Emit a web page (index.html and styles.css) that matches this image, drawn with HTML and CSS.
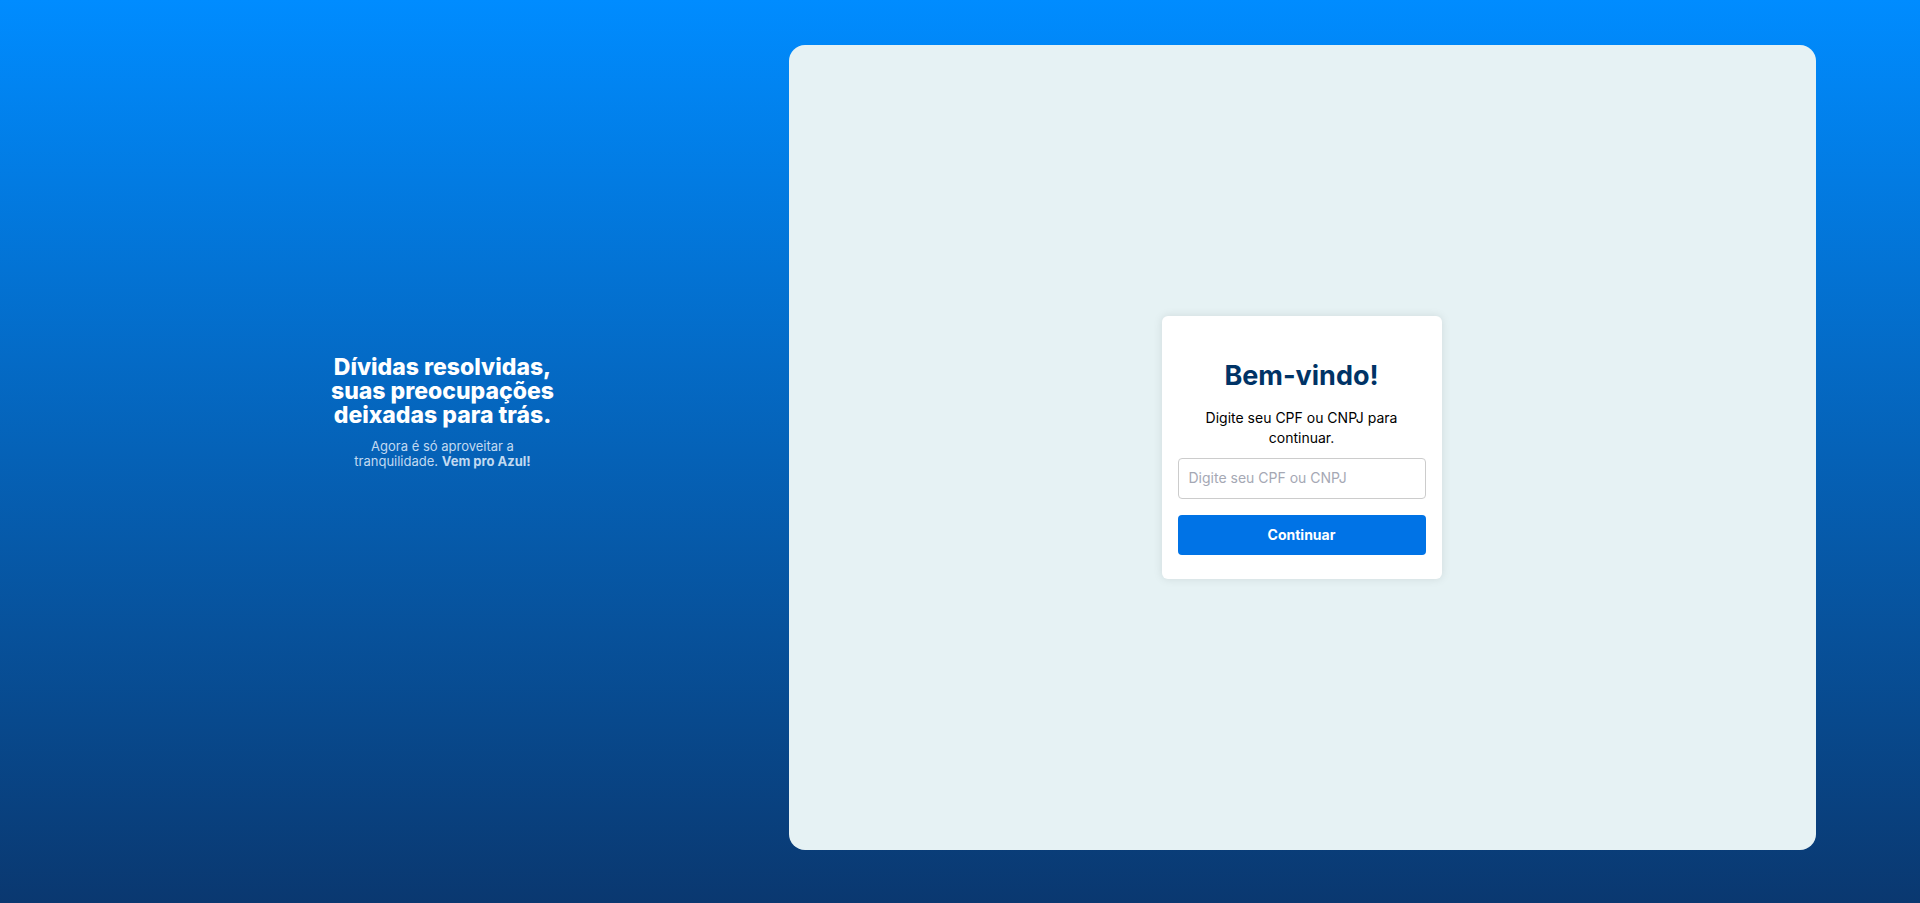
FILE: index.html
```html
<!DOCTYPE html>
<html lang="pt-BR">
<head>
<meta charset="utf-8">
<meta name="viewport" content="width=device-width, initial-scale=1">
<title>Bem-vindo</title>
<link rel="stylesheet" href="styles.css">
</head>
<body>
<div class="page">
  <section class="intro">
    <h2 class="intro-title">Dívidas resolvidas,<br>suas preocupações<br>deixadas para trás.</h2>
    <p class="intro-text">Agora é só aproveitar a<br>tranquilidade. <strong>Vem pro Azul!</strong></p>
  </section>
  <main class="panel">
    <form class="card">
      <h1 class="card-title">Bem-vindo!</h1>
      <label class="card-label" for="document">Digite seu CPF ou CNPJ para continuar.</label>
      <input class="field" id="document" type="text" placeholder="Digite seu CPF ou CNPJ">
      <button class="submit" type="submit">Continuar</button>
    </form>
  </main>
</div>
</body>
</html>
```
FILE: styles.css
```css
* {
  box-sizing: border-box;
}

body {
  margin: 0;
  font-family: Inter, "Liberation Sans", sans-serif;
  background: #0a366e;
}

.page {
  display: grid;
  grid-template-columns: 677fr 1027fr;
  gap: 8px;
  min-height: 100vh;
  padding: 45px 104px 53px;
  background: linear-gradient(180deg, #008cff 0%, #0a3870 100%);
}

.intro {
  display: flex;
  flex-direction: column;
  align-items: center;
  justify-content: center;
  padding-bottom: 72px;
  text-align: center;
  color: #fff;
}

.intro-title {
  margin: 0;
  font-size: 23px;
  line-height: 24px;
  font-weight: 800;
}

.intro-text {
  margin: 12px 0 0;
  font-size: 13px;
  line-height: 15px;
  color: #c2daf1;
}

.panel {
  display: flex;
  align-items: center;
  justify-content: center;
  padding-right: 2px;
  background: #e6f2f4;
  border-radius: 16px;
}

.card {
  display: flex;
  flex-direction: column;
  width: 280px;
  padding: 40px 16px 24px;
  background: #fff;
  border-radius: 6px;
  box-shadow: 0 0 10px rgba(0, 0, 0, 0.1);
}

.card-title {
  margin: 0 0 12px;
  font-size: 27px;
  line-height: 40px;
  font-weight: 700;
  text-align: center;
  color: #003366;
}

.card-label {
  margin-bottom: 10px;
  padding: 0 16px;
  font-size: 14px;
  line-height: 20px;
  text-align: center;
  color: #000;
}

.field {
  width: 100%;
  height: 41px;
  margin: 0 0 16px;
  padding: 0 10px 2px;
  border: 1px solid #ccc;
  border-radius: 4px;
  font: inherit;
  font-size: 14px;
  background: #fff;
}

.field::placeholder {
  color: #a5a8b4;
}

.submit {
  height: 40px;
  padding: 0 0 2px;
  border: 0;
  border-radius: 4px;
  font: inherit;
  font-size: 14px;
  font-weight: 700;
  color: #fff;
  background: #0073e6;
  cursor: pointer;
}
```
